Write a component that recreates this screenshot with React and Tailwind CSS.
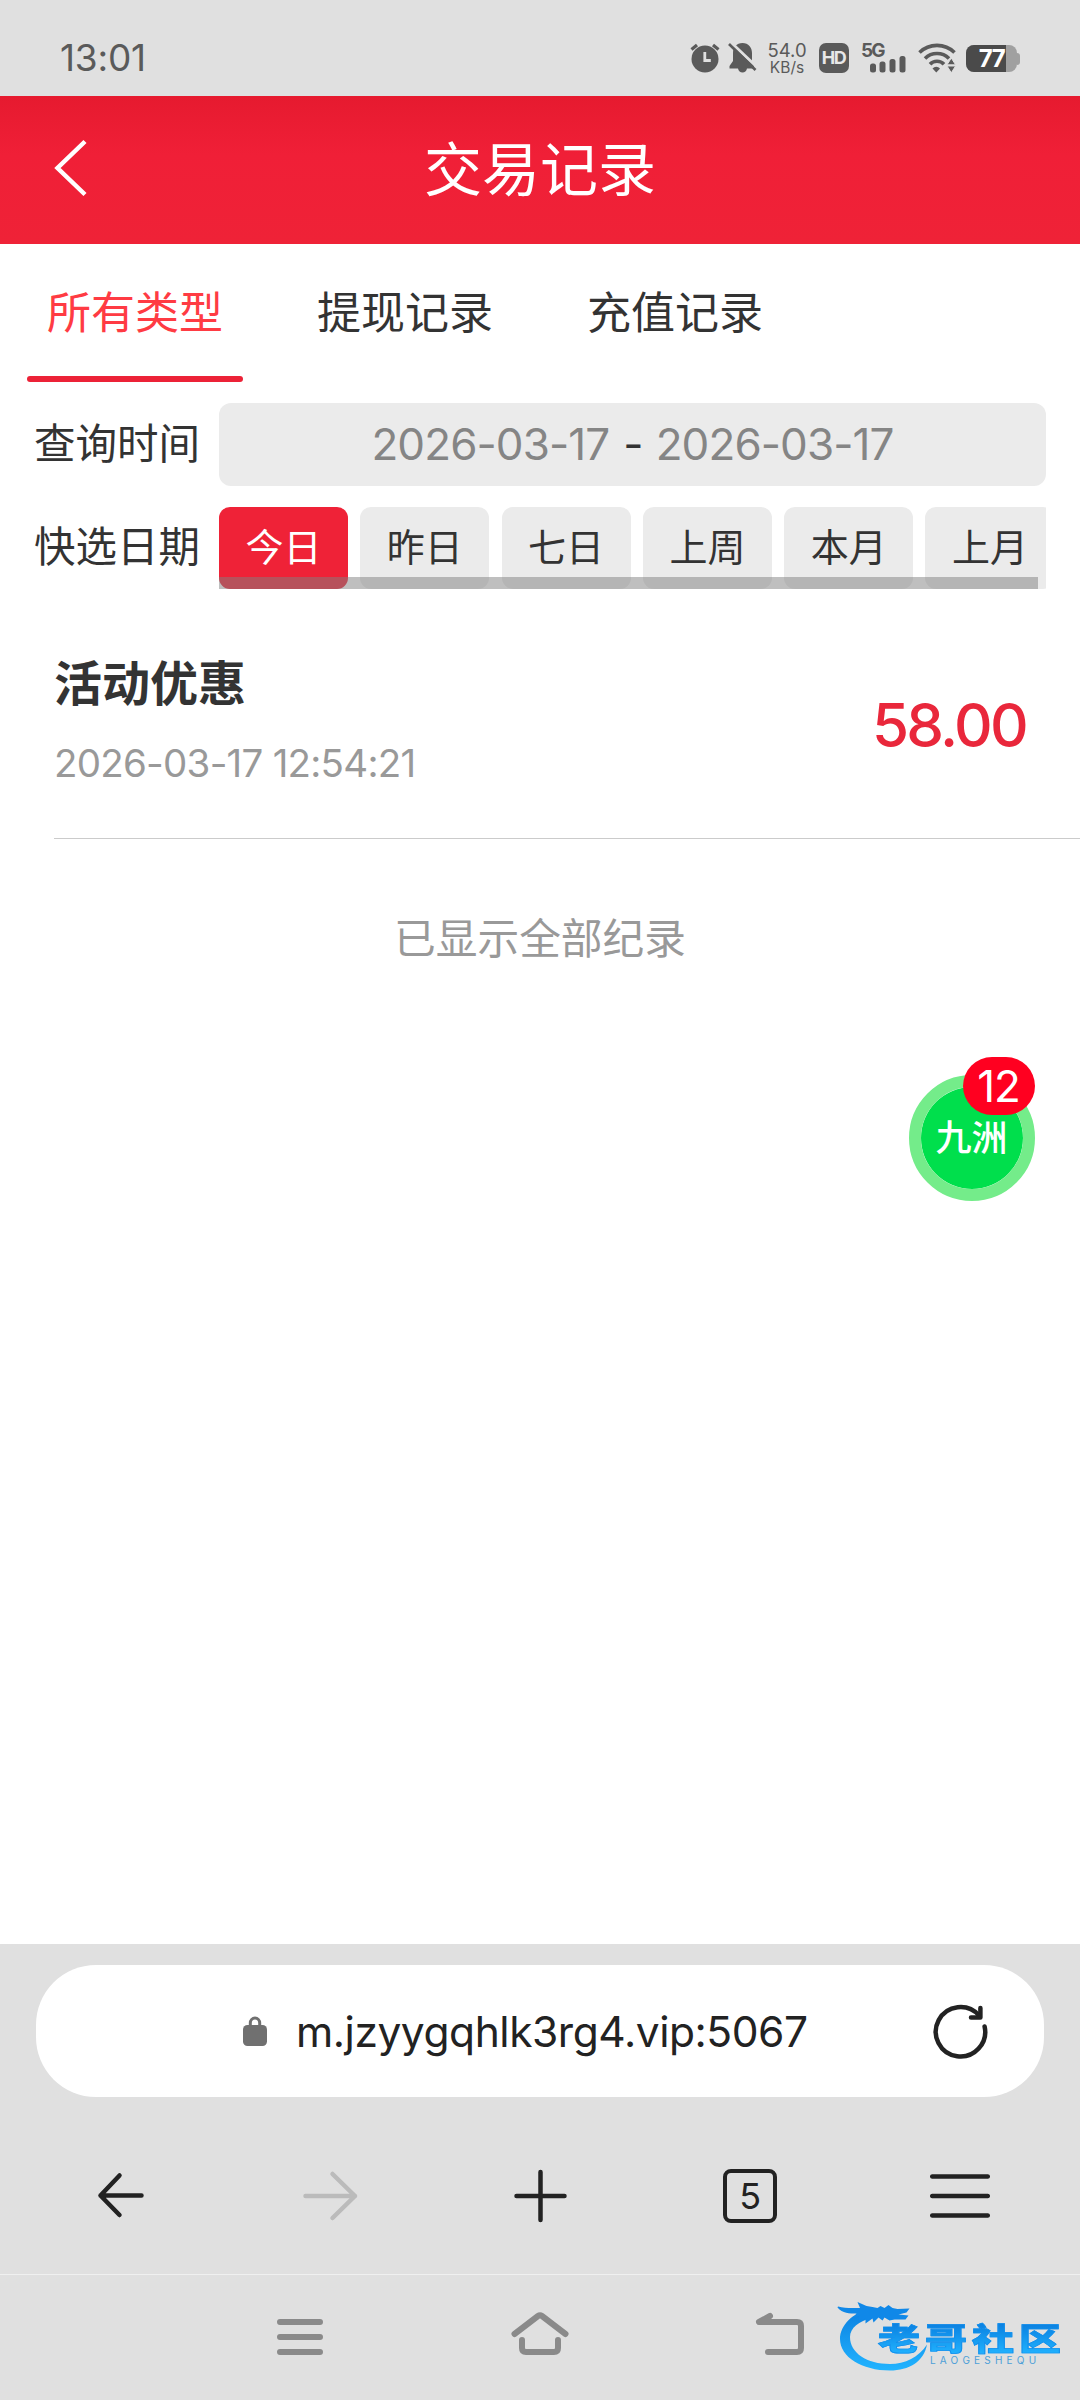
const tabs = ["所有类型", "提现记录", "充值记录"];
const ranges = ["今日", "昨日", "七日", "上周", "本月", "上月"];
const records = [{ id: 1, title: "活动优惠", time: "2026-03-17 12:54:21", amount: "58.00" }];

function StatusBar() {
  return (
    <div className="h-24 bg-[#e0e0e0] flex items-center justify-between pl-[60px] pr-[60px] pt-[18px] text-[#5a5a5a]">
      <span className="pt-px text-[37px] leading-none tracking-[-0.2px]">13:01</span>

      <div className="flex items-center h-8">
        {/* Alarm */}
        <svg width="30" height="32" viewBox="0 0 30 32" fill="none">
          <circle cx="15" cy="18" r="13.5" fill="currentColor" />
          <path d="M1.500 8.500 7 4M28.500 8.500 23 4" stroke="currentColor" strokeWidth="3.200" />
          <path d="M14.800 11v8.500h6" stroke="#e0e0e0" strokeWidth="2.800" />
        </svg>
        {/* Muted bell */}
        <svg className="ml-2" width="30" height="32" viewBox="0 0 30 32" fill="none">
          <path d="M14.500 2c-6 0-9.500 4.500-9.500 10v8l-3.500 5v2.500h8.500c.5 2.500 2.300 4 4.500 4s4-1.500 4.500-4H26v-2.500l-2-5v-8c0-5.500-3.500-10-9.500-10z" fill="currentColor" />
          <path d="M3 1.500 30 27" stroke="#e0e0e0" strokeWidth="3" />
          <path d="M1 3 27.500 29" stroke="currentColor" strokeWidth="2.600" />
        </svg>
        <div className="ml-[10px] mt-1 w-[38px] flex flex-col items-center leading-none">
          <span className="text-[18.500px] leading-[17px]">54.0</span>
          <span className="text-[15.500px] leading-[17px]">KB/s</span>
        </div>
        <div className="ml-[13px] mt-px w-[30px] h-[30px] rounded-[7px] bg-[#5a5a5a] flex items-center justify-center text-[#e8e8e8] text-[18px] leading-none font-bold tracking-[-1.500px] pr-px">
          HD
        </div>
        {/* Signal */}
        <div className="relative ml-3 w-[45px] h-8">
          <span className="absolute left-0 top-[2px] text-[19px] leading-[16px] font-bold tracking-[-1.800px]">5G</span>
          <svg className="absolute left-0 top-0" width="45" height="32" viewBox="0 0 45 32" fill="currentColor">
            <rect x="9" y="22.500" width="6" height="9" rx="2.500" />
            <rect x="18.500" y="20.500" width="6" height="11" rx="2.500" />
            <rect x="28.500" y="18" width="6" height="13.500" rx="2.500" />
            <rect x="38.500" y="15" width="6" height="16.500" rx="2.500" />
          </svg>
        </div>
        {/* Wifi */}
        <svg className="ml-3" width="38" height="32" viewBox="0 0 38 32" fill="none" stroke="currentColor" strokeWidth="3.600">
          <path d="M1.500 11.500a25 25 0 0 1 35 0M7 17.500a17 17 0 0 1 24 0M12 23.300a9.500 9.500 0 0 1 14 0" />
          <path d="M14.500 27.500a5 5 0 0 1 7.500 0L18.300 31.500z" fill="currentColor" stroke="none" />
          <path d="M29 23.800 33.300 17l4.300 6.800zM29 25l4.300 6.800 4.300-6.800z" fill="currentColor" stroke="#e0e0e0" strokeWidth="1" />
        </svg>
        {/* Battery */}
        <div className="ml-[10px] mt-[3px] flex items-center">
          <div className="relative w-[51px] h-[27px] rounded-[8px] overflow-hidden bg-[#a0a0a0]">
            <div className="w-10 h-full bg-[#4a4a4a]" />
            <span className="absolute inset-0 flex items-center justify-center text-[24px] leading-none font-bold text-white tracking-[-1.500px]">77</span>
          </div>
          <div className="w-[3px] h-3 rounded-r bg-[#a0a0a0]" />
        </div>
      </div>
    </div>
  );
}

function Header() {
  return (
    <div className="relative h-[148px] bg-linear-to-b from-[#e61a2f] via-[#f01f37] via-40% to-[#ef2237] flex items-center justify-center">
      <svg className="absolute left-[54px] top-[43px]" width="34" height="58" viewBox="0 0 34 58" fill="none" stroke="white" strokeWidth="4.500">
        <path d="M31 2.500 3.500 29 31 55.500" />
      </svg>
      <h1 className="text-[58px] leading-none text-white">交易记录</h1>
    </div>
  );
}

function Filters() {
  return (
    <div className="text-[#333]">
      <div className="flex h-[138px]">
        {tabs.map((tab, i) => (
          <div key={tab} className="w-[270px] flex flex-col items-center">
            <span className={`h-[132px] flex items-center pt-[6px] text-[44px] leading-none ${i === 0 ? "text-[#ff3b43]" : ""}`}>{tab}</span>
            {i === 0 && <div className="w-[216px] h-[6px] rounded-full bg-[#ec2237]" />}
          </div>
        ))}
      </div>

      <div className="mt-[21px] flex items-center pl-[34px] h-[83px]">
        <span className="w-[185px] text-[41.500px] leading-none">查询时间</span>
        <div className="w-[827px] h-full rounded-[12px] bg-[#ebebeb] flex items-center justify-center pb-px text-[44px] leading-none text-[#858585] tracking-[-0.900px]">
          <span>2026-03-17</span>
          <span className="ml-[14px] mr-[13px] text-[#333]">-</span>
          <span>2026-03-17</span>
        </div>
      </div>

      <div className="mt-[21px] flex items-center pl-[34px] h-[82px]">
        <span className="w-[185px] text-[41.500px] leading-none">快选日期</span>
        <div className="relative w-[827px] h-full flex gap-[12.300px] overflow-hidden">
          {ranges.map((range, i) => (
            <div
              key={range}
              className={`w-[129px] h-full shrink-0 rounded-[11px] flex items-center justify-center pb-[2px] text-[38px] leading-none ${i === 0 ? "bg-[#ef2237] text-white" : "bg-[#ebebeb]"}`}
            >
              {range}
            </div>
          ))}
          {/* Scroll indicator */}
          <div className="absolute left-0 bottom-0 w-[819px] h-3 bg-[#808080]/50" />
        </div>
      </div>
    </div>
  );
}

function RecordList() {
  return (
    <div>
      {records.map((record) => (
        <div key={record.id} className="ml-[54px] h-[250px] border-b-[1.500px] border-[#cbcbcb] flex justify-between pr-[54px]">
          <div className="pt-[70px]">
            <p className="text-[48px] leading-[50px] font-bold text-[#333]">{record.title}</p>
            <p className="mt-[29px] text-[38.500px] leading-[50px] text-[#999] tracking-[-0.750px]">{record.time}</p>
          </div>
          <span className="pt-[101px] text-[60px] leading-[70px] font-medium text-[#e9273b] tracking-[-2.700px]">{record.amount}</span>
        </div>
      ))}
      <p className="mt-[79px] text-[41.700px] leading-[42px] text-center text-[#999]">已显示全部纪录</p>
    </div>
  );
}

function ChatBubble() {
  return (
    <div className="absolute left-[908.500px] top-[1075px] w-[126px] h-[126px] rounded-full border-[12px] border-[#74ec8a] bg-[#00df4c] bg-clip-padding flex items-center justify-center">
      <span className="text-[36px] leading-none font-medium text-white whitespace-nowrap">九洲</span>
      <span className="absolute left-[42px] -top-[30px] w-[72px] h-[58px] rounded-full bg-[#ff0020] flex items-center justify-center text-[44px] leading-none text-white tracking-[-1px]">12</span>
    </div>
  );
}

function BrowserBar() {
  return (
    <div className="h-[330px] px-9 pt-[21px] bg-[#e0e0e0] text-[#222]">
      <div className="h-[132px] rounded-[60px] bg-white flex items-center pl-[207px] pr-[56px]">
        <svg width="24" height="30" viewBox="0 0 24 30" fill="none">
          <path d="M7.300 12V7a4.700 5 0 0 1 9.400 0v5" stroke="#707070" strokeWidth="3" />
          <rect y="9" width="24" height="21" rx="4.500" fill="#707070" />
        </svg>
        <span className="ml-[29px] pt-[2px] text-[42.500px] leading-none tracking-[-0.450px]">m.jzyygqhlk3rg4.vip:5067</span>
        <svg className="ml-auto" width="56" height="56" viewBox="0 0 56 56" fill="none" stroke="currentColor" strokeWidth="4.500" strokeLinecap="round" strokeLinejoin="round">
          <path d="M52.600 23.500A24.700 24.700 0 1 1 47 12.500" />
          <path d="M48.400 5v9.500H39" />
        </svg>
      </div>

      <div className="mt-[64px] flex justify-between items-center h-[70px] pl-[55px] pr-[54px]">
        <svg width="60" height="60" viewBox="0 0 60 60" fill="none" stroke="currentColor" strokeWidth="4.500" strokeLinecap="round" strokeLinejoin="round">
          <path d="M50.500 29.500H9.500M28.500 9.500 9.500 29.500l19 19.500" />
        </svg>
        <svg width="60" height="60" viewBox="0 0 60 60" fill="none" stroke="#bbb" strokeWidth="4.500" strokeLinecap="round" strokeLinejoin="round">
          <path d="M4.500 30h49.500M31.500 8l22.500 22-22.500 22" />
        </svg>
        <svg width="60" height="60" viewBox="0 0 60 60" fill="none" stroke="currentColor" strokeWidth="4.500" strokeLinecap="round">
          <path d="M5.500 30h48M29.500 6v48" />
        </svg>
        <div className="mx-[3px] w-[54px] h-[54px] rounded-[8px] border-[4.500px] border-[#222] flex items-center justify-center text-[36px] leading-none">5</div>
        <svg width="60" height="60" viewBox="0 0 60 60" fill="none" stroke="currentColor" strokeWidth="4.500" strokeLinecap="round">
          <path d="M2.200 10.500h55.600M2.200 30h55.600M2.200 49.500h55.600" />
        </svg>
      </div>
    </div>
  );
}

function Watermark() {
  return (
    <div className="absolute left-[835px] top-[15px] w-[235px] h-[90px]">
      <svg className="absolute left-0 top-0" width="110" height="90" viewBox="0 0 110 90">
        <defs>
          <linearGradient id="dragon" x1="0" y1="0" x2="0" y2="1">
            <stop offset="0" stopColor="#0b7fe0" />
            <stop offset="1" stopColor="#22b4ff" />
          </linearGradient>
        </defs>
        {/* Body */}
        <path fill="url(#dragon)" d="M34 19C18 23 5 35 5 49c0 18 22 31.500 50 31.500 19 0 34-9 37-26C84 67 70 74 55 74 32 74 15 63 15 47c0-9 9-16 22-19z" />
        {/* Head, horns and whiskers */}
        <path fill="#1088e8" d="M3 16.500c7 2 14 1.500 22 1.500l-2.500-6 9 4 6 1 5 1 3-2 4 2 4-3 4 3 5 1 12-.5-3 4-8 2 10 1-3 4-11 0-5 1-5-3-2 3-4-3-5 5-1-4-7 5 0-5-7 4 1-7-6 2 3-4c-7 0-14 0-19-6z" />
      </svg>
      <span className="absolute left-[43px] top-[27px] origin-left scale-y-[0.740] text-[42px] leading-[44px] font-black tracking-[5px] whitespace-nowrap bg-linear-to-b from-[#0b7fe0] to-[#22b4ff] bg-clip-text text-transparent [-webkit-text-stroke:1px_#148fec]">老哥社区</span>
      <span className="absolute left-[95px] top-[62px] text-[10px] leading-[16px] tracking-[4.200px] text-[#4d9fd8]">LAOGESHEQU</span>
    </div>
  );
}

function SystemNav() {
  return (
    <div className="relative h-[126px] bg-[#e0e0e0] border-t border-[#f0f0f0]">
      <div className="flex justify-center gap-[180px] pt-[32px] text-[#8a8a8a]">
        <svg width="60" height="60" viewBox="0 0 60 60" fill="none" stroke="currentColor" strokeWidth="6" strokeLinecap="round">
          <path d="M10 15h40M10 30h40M10 45h40" />
        </svg>
        <svg width="60" height="60" viewBox="0 0 60 60" fill="none" stroke="currentColor" strokeWidth="6" strokeLinecap="round" strokeLinejoin="round">
          <path d="M4.500 27 28 9q2-1.500 4 0l23.500 18M12 33v8q0 4 4 4h28q4 0 4-4v-8" />
        </svg>
        <svg width="60" height="60" viewBox="0 0 60 60" fill="none" stroke="currentColor" strokeWidth="6" strokeLinecap="round" strokeLinejoin="round">
          <path d="M20 9 9 15h38q4 0 4 4v22q0 4-4 4H18" />
        </svg>
      </div>
      <Watermark />
    </div>
  );
}

export default function App() {
  return (
    <div className="relative w-[1080px] h-[2400px] bg-white flex flex-col overflow-hidden font-['Inter','Noto_Sans_CJK_SC',sans-serif]">
      <StatusBar />
      <Header />
      <Filters />
      <div className="flex-1">
        <RecordList />
      </div>
      <BrowserBar />
      <SystemNav />
      <ChatBubble />
    </div>
  );
}
